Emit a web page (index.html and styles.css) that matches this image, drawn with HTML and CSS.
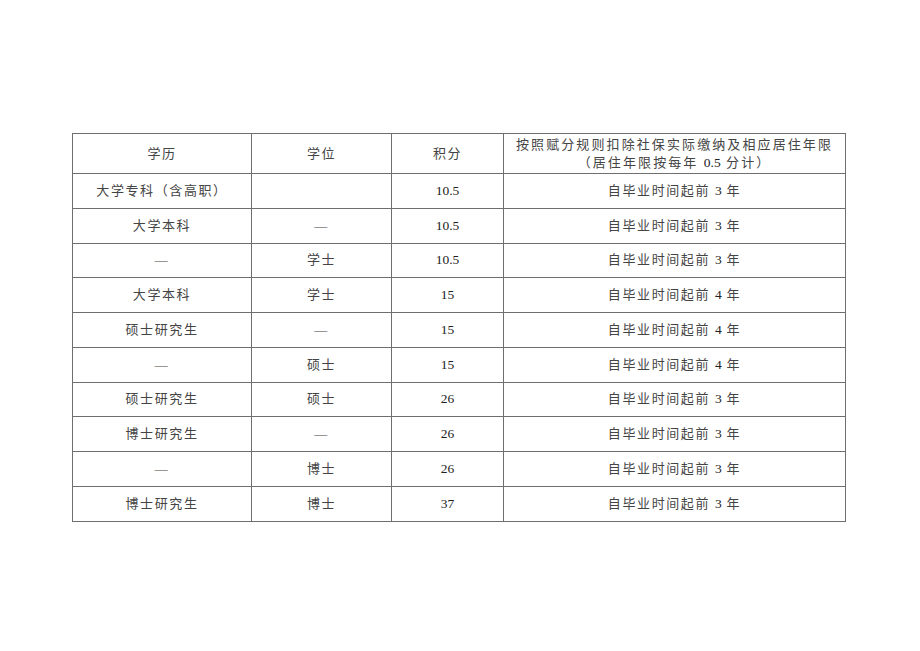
FILE: index.html
```html
<!DOCTYPE html>
<html lang="zh">
<head>
<meta charset="utf-8">
<link rel="stylesheet" href="styles.css">
</head>
<body>
<div class="page">
<table class="grid">
<colgroup><col class="c1"><col class="c2"><col class="c3"><col class="c4"></colgroup>
<tr class="head"><td>学历</td><td>学位</td><td>积分</td><td class="wide">按照赋分规则扣除社保实际缴纳及相应居住年限<br>（居住年限按每年 <span class="num">0.5</span> 分计）</td></tr>
<tr><td>大学专科（含高职）</td><td></td><td class="score">10.5</td><td>自毕业时间起前 <span class="num">3</span> 年</td></tr>
<tr><td>大学本科</td><td>—</td><td class="score">10.5</td><td>自毕业时间起前 <span class="num">3</span> 年</td></tr>
<tr><td>—</td><td>学士</td><td class="score">10.5</td><td>自毕业时间起前 <span class="num">3</span> 年</td></tr>
<tr><td>大学本科</td><td>学士</td><td class="score">15</td><td>自毕业时间起前 <span class="num">4</span> 年</td></tr>
<tr><td>硕士研究生</td><td>—</td><td class="score">15</td><td>自毕业时间起前 <span class="num">4</span> 年</td></tr>
<tr><td>—</td><td>硕士</td><td class="score">15</td><td>自毕业时间起前 <span class="num">4</span> 年</td></tr>
<tr><td>硕士研究生</td><td>硕士</td><td class="score">26</td><td>自毕业时间起前 <span class="num">3</span> 年</td></tr>
<tr><td>博士研究生</td><td>—</td><td class="score">26</td><td>自毕业时间起前 <span class="num">3</span> 年</td></tr>
<tr><td>—</td><td>博士</td><td class="score">26</td><td>自毕业时间起前 <span class="num">3</span> 年</td></tr>
<tr><td>博士研究生</td><td>博士</td><td class="score">37</td><td>自毕业时间起前 <span class="num">3</span> 年</td></tr>
</table>
</div>
</body>
</html>
```

FILE: styles.css
```css
html, body {
  margin: 0;
  padding: 0;
  background: #ffffff;
}
.page {
  padding: 133px 0 0 72px;
}
.grid {
  border-collapse: collapse;
  table-layout: fixed;
  width: 773px;
  font-family: "Liberation Serif", "Noto Sans CJK SC", serif;
  font-size: 13px;
  color: #444;
}
.c1 { width: 179px; }
.c2 { width: 140px; }
.c3 { width: 112px; }
.c4 { width: 342px; }
.grid td {
  border: 1px solid #6f6f6f;
  text-align: center;
  vertical-align: middle;
  padding: 0;
  height: 33.75px;
  letter-spacing: 1.6px;
  line-height: 18px;
}
.grid tr.head td {
  height: 39px;
}
.grid td.wide {
  letter-spacing: 2.1px;
}
.grid td.score {
  font-family: "Liberation Serif", serif;
  color: #222;
  letter-spacing: 0;
  font-size: 13.5px;
}
.num {
  font-family: "Liberation Serif", serif;
  color: #222;
  letter-spacing: 0;
  font-size: 13.5px;
}
```
